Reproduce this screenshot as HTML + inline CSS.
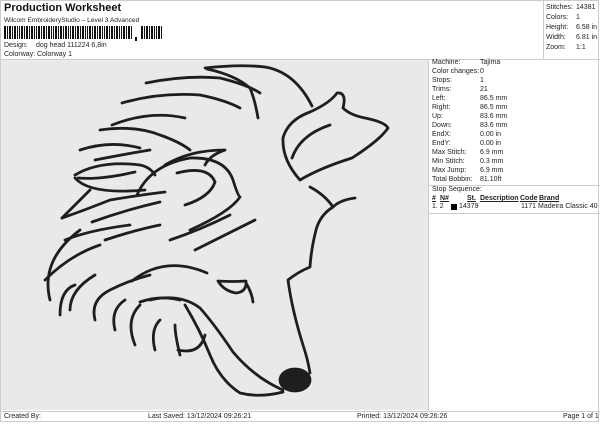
<!DOCTYPE html>
<html><head><style>
body{margin:0;width:600px;height:424px;background:#fff;font-family:"Liberation Sans",sans-serif;color:#222;position:relative;overflow:hidden}
.a{position:absolute;white-space:nowrap}
.s{font-size:7px}
</style></head><body>
<div class="a" style="left:0;top:0;width:599px;height:422px;border:1px solid #ccc;box-sizing:border-box"></div>
<div class="a" style="left:4px;top:2px;font-size:11px;font-weight:bold;color:#111">Production Worksheet</div>
<div class="a s" style="left:4px;top:17px;font-size:6.6px">Wilcom EmbroideryStudio – Level 3 Advanced</div>
<svg class="a" style="left:4px;top:26px" width="162" height="15">
<g fill="#111">
<rect x="0" y="0" width="2" height="13"/><rect x="3" y="0" width="1" height="13"/><rect x="5" y="0" width="2" height="13"/><rect x="8" y="0" width="1" height="13"/><rect x="10" y="0" width="2" height="13"/><rect x="13" y="0" width="1" height="13"/><rect x="15" y="0" width="1" height="13"/><rect x="17" y="0" width="2" height="13"/><rect x="20" y="0" width="1" height="13"/><rect x="22" y="0" width="2" height="13"/><rect x="25" y="0" width="1" height="13"/><rect x="27" y="0" width="2" height="13"/><rect x="30" y="0" width="1" height="13"/><rect x="32" y="0" width="1" height="13"/><rect x="34" y="0" width="2" height="13"/><rect x="37" y="0" width="1" height="13"/><rect x="39" y="0" width="2" height="13"/><rect x="42" y="0" width="1" height="13"/><rect x="44" y="0" width="2" height="13"/><rect x="47" y="0" width="1" height="13"/><rect x="49" y="0" width="1" height="13"/><rect x="51" y="0" width="2" height="13"/><rect x="54" y="0" width="1" height="13"/><rect x="56" y="0" width="2" height="13"/><rect x="59" y="0" width="1" height="13"/><rect x="61" y="0" width="2" height="13"/><rect x="64" y="0" width="1" height="13"/><rect x="66" y="0" width="1" height="13"/><rect x="68" y="0" width="2" height="13"/><rect x="71" y="0" width="1" height="13"/><rect x="73" y="0" width="2" height="13"/><rect x="76" y="0" width="1" height="13"/><rect x="78" y="0" width="2" height="13"/><rect x="81" y="0" width="1" height="13"/><rect x="83" y="0" width="1" height="13"/><rect x="85" y="0" width="2" height="13"/><rect x="88" y="0" width="1" height="13"/><rect x="90" y="0" width="2" height="13"/><rect x="93" y="0" width="1" height="13"/><rect x="95" y="0" width="2" height="13"/><rect x="98" y="0" width="1" height="13"/><rect x="100" y="0" width="1" height="13"/><rect x="102" y="0" width="2" height="13"/><rect x="105" y="0" width="1" height="13"/><rect x="107" y="0" width="2" height="13"/><rect x="110" y="0" width="1" height="13"/><rect x="112" y="0" width="2" height="13"/><rect x="115" y="0" width="1" height="13"/><rect x="117" y="0" width="1" height="13"/><rect x="119" y="0" width="2" height="13"/><rect x="122" y="0" width="1" height="13"/><rect x="124" y="0" width="2" height="13"/><rect x="127" y="0" width="1" height="13"/>
<rect x="131" y="11" width="2" height="4"/>
<rect x="137" y="0" width="2" height="13"/><rect x="140" y="0" width="1" height="13"/><rect x="142" y="0" width="2" height="13"/><rect x="145" y="0" width="1" height="13"/><rect x="147" y="0" width="2" height="13"/><rect x="150" y="0" width="1" height="13"/><rect x="152" y="0" width="1" height="13"/><rect x="154" y="0" width="2" height="13"/><rect x="157" y="0" width="1" height="13"/>
</g></svg>
<div class="a s" style="left:4px;top:42px">Design:</div><div class="a s" style="left:36px;top:42px">dog head 111224 6,8in</div>
<div class="a s" style="left:4px;top:51px">Colorway:</div><div class="a s" style="left:37px;top:51px">Colorway 1</div>
<div class="a" style="left:543px;top:0;width:1px;height:59px;background:#ccc"></div>
<div class="a s" style="left:546px;top:3px;line-height:10px">Stitches:<br>Colors:<br>Height:<br>Width:<br>Zoom:</div>
<div class="a s" style="left:576px;top:3px;line-height:10px">14381<br>1<br>6.58 in<br>6.81 in<br>1:1</div>
<div class="a" style="left:0;top:59px;width:600px;height:1px;background:#ccc"></div>
<div class="a" style="left:1px;top:60px;width:427px;height:350px;background:#e9e9e9"></div>
<div class="a" style="left:428px;top:59px;width:1px;height:352px;background:#ccc"></div>
<div class="a s" style="left:432px;top:58px;line-height:9px">Machine:<br>Color changes:<br>Stops:<br>Trims:<br>Left:<br>Right:<br>Up:<br>Down:<br>EndX:<br>EndY:<br>Max Stitch:<br>Min Stitch:<br>Max Jump:<br>Total Bobbin:</div>
<div class="a s" style="left:480px;top:58px;line-height:9px">Tajima<br>0<br>1<br>21<br>86.5 mm<br>86.5 mm<br>83.6 mm<br>83.6 mm<br>0.00 in<br>0.00 in<br>6.9 mm<br>0.3 mm<br>6.9 mm<br>81.10ft</div>
<div class="a" style="left:429px;top:185px;width:171px;height:1px;background:#ccc"></div>
<div class="a s" style="left:432px;top:186px">Stop Sequence:</div>
<div class="a s" style="left:432px;top:195px;font-weight:bold;text-decoration:underline">#</div>
<div class="a s" style="left:440px;top:195px;font-weight:bold;text-decoration:underline">N#</div>
<div class="a s" style="left:467px;top:195px;font-weight:bold;text-decoration:underline">St.</div>
<div class="a s" style="left:480px;top:195px;font-weight:bold;text-decoration:underline">Description</div>
<div class="a s" style="left:520px;top:195px;font-weight:bold;text-decoration:underline">Code</div>
<div class="a s" style="left:539px;top:195px;font-weight:bold;text-decoration:underline">Brand</div>
<div class="a s" style="left:432px;top:203px">1. 2</div>
<div class="a" style="left:451px;top:204px;width:6px;height:6px;background:#000"></div>
<div class="a s" style="left:459px;top:203px">14379</div>
<div class="a s" style="left:521px;top:203px">1171 Madeira Classic 40</div>
<div class="a" style="left:429px;top:213px;width:171px;height:1px;background:#ccc"></div>
<div class="a" style="left:0;top:411px;width:600px;height:1px;background:#ccc"></div>
<div class="a s" style="left:4px;top:413px">Created By:</div>
<div class="a s" style="left:148px;top:413px">Last Saved: 13/12/2024 09:26:21</div>
<div class="a s" style="left:357px;top:413px">Printed: 13/12/2024 09:26:26</div>
<div class="a s" style="left:563px;top:413px">Page 1 of 1</div>
<svg class="a" style="left:0;top:0" width="600" height="424" fill="none" stroke="#1e1e1e" stroke-width="2.8" stroke-linecap="round" stroke-linejoin="round">
<path d="M205 68 Q240 64 265 67 Q295 72 312 106"/>
<path d="M207 69 Q235 75 250 88 Q255 100 258 118"/>
<path d="M300 180 Q282 160 283 138 Q288 120 310 112 Q330 103 337 93 Q347 92 343 108 Q350 115 365 118 Q385 122 388 128 Q380 140 352 158 Q320 168 300 180"/>
<path d="M292 158 Q300 135 330 125"/>
<path d="M310 187 Q325 195 333 207 Q320 215 316 230 Q311 250 310 267 Q298 272 288 280 Q292 310 303 345 Q308 360 310 373"/>
<path d="M333 207 Q340 200 355 198"/>
<ellipse cx="295" cy="380" rx="15" ry="11" fill="#1e1e1e"/>
<path d="M283 390 Q255 378 233 352 Q215 325 200 308 Q180 293 150 300"/>
<path d="M185 305 Q200 330 210 355 Q220 380 240 393 Q260 398 283 392"/>
<path d="M218 281 Q232 282 246 281 Q247 292 236 293 Q224 291 218 281 M246 283 Q252 293 253 302"/>
<path d="M132 281 Q165 255 207 273"/>
<path d="M137 195 Q150 165 190 158 Q225 157 233 180 Q238 196 240 197 Q230 212 190 230"/>
<path d="M177 173 Q208 165 215 182 Q210 197 185 205"/>
<path d="M146 83 Q185 75 220 78 Q248 85 260 93"/>
<path d="M122 103 Q160 92 200 95 Q225 100 240 108"/>
<path d="M112 125 Q150 110 185 118"/>
<path d="M100 130 Q135 125 160 135 Q180 142 190 150"/>
<path d="M80 150 Q110 140 140 148"/>
<path d="M75 175 Q100 160 140 165 Q150 167 155 175"/>
<path d="M78 178 Q100 180 135 172"/>
<path d="M75 178 Q90 195 145 190"/>
<path d="M62 218 Q85 210 110 200 Q140 195 165 192"/>
<path d="M62 218 Q80 200 90 190"/>
<path d="M92 222 Q125 210 160 202"/>
<path d="M105 240 Q135 230 160 225"/>
<path d="M65 240 Q90 230 130 225"/>
<path d="M45 280 Q70 255 100 245"/>
<path d="M50 300 Q40 260 80 230"/>
<path d="M60 315 Q60 290 75 285 M70 310 Q70 290 95 275 M95 320 Q90 300 110 290 Q130 280 150 275"/>
<path d="M115 330 Q110 310 125 300 M135 345 Q125 320 140 305 M155 350 Q150 330 160 320 M180 355 Q175 335 175 325"/>
<path d="M140 302 Q160 295 180 300 M178 350 Q200 355 205 335"/>
<path d="M165 165 Q190 150 225 150 Q210 155 205 165"/>
<path d="M95 160 Q120 155 150 150"/>
<path d="M170 240 Q200 230 230 215 M195 250 Q225 235 255 220"/>
</svg>
</body></html>
